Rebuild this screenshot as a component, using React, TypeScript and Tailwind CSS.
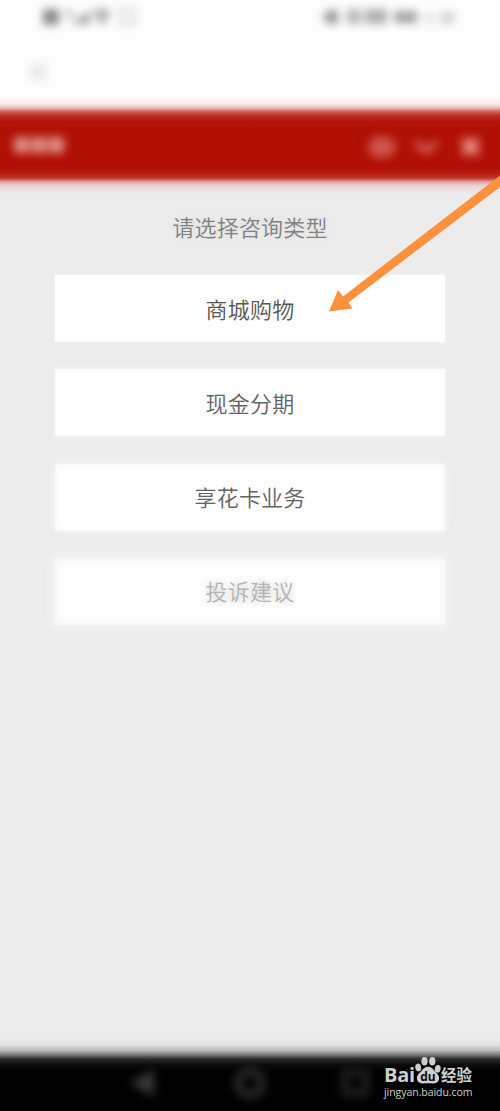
interface OptionCardProps {
  label: string;
  className?: string;
}

const options: OptionCardProps[] = [
  { label: "商城购物", className: "bg-[#fefefe] text-[#565656] shadow-[0_0_3px_#f8f8f8]" },
  { label: "现金分期", className: "bg-[#fefefe] text-[#626262] shadow-[0_0_4px_#f8f8f8,inset_0_0_4px_#f8f8f8]" },
  { label: "享花卡业务", className: "bg-[#fefefe] text-[#626262] shadow-[0_0_7px_#f8f8f8,inset_0_0_6px_#f6f6f6]" },
];

function OptionCard({ label, className }: OptionCardProps) {
  return (
    <button
      className={`flex h-[67px] w-[390px] items-center justify-center pb-[2px] text-[22px] leading-none tracking-[0.2px] font-[350] ${className}`}
    >
      {label}
    </button>
  );
}

function StatusBar() {
  return (
    <div className="h-[36px] w-full">
      <svg className="h-[36px] w-[500px] blur-[4px]" viewBox="0 0 500 36" fill="none">
        {/* Carrier and network indicators */}
        <rect x="43" y="9" width="16" height="16" fill="#8c8c8c" />
        <path d="M64 11h10v6h-7z" fill="#bbb" />
        <path d="M71 24 90 10v14z" fill="#a4a4a4" />
        <path d="M93 11q9-5 18 0l-7 13h-4z" fill="#b0b0b0" />
        <rect x="121" y="10" width="13" height="14" stroke="#d4d4d4" strokeWidth="3" />
        {/* Alarm, sound, battery and clock */}
        <path d="M322 17l7-7h9v14h-9z" fill="#9a9a9a" />
        <rect x="347" y="9" width="14" height="15" fill="#b8b8b8" />
        <rect x="365" y="9" width="22" height="15" fill="#b0b0b0" />
        <rect x="394" y="11" width="23" height="12" fill="#a4a4a4" />
        <rect x="425" y="13" width="9" height="9" fill="#dedede" />
        <rect x="440" y="12" width="14" height="12" fill="#d4d4d4" />
      </svg>
    </div>
  );
}

function ChatHeader() {
  return (
    <header className="flex h-[98px] shrink-0 items-center justify-between bg-linear-[180deg,#fdfdfd_0px,#f9ecea_8px,#e9b8b4_12px,#cb5b52_16px,#b9271b_21px,#b3140a_26px,#b11004_32px,#b11004_70px,#b51b0e_77px,#c0352a_82px,#e0a8a4_86px,#ebd6d5_90px,#ececec_98px] pr-[18px] pl-[14px]">
      <svg className="mt-[2px] h-[30px] w-[52px] overflow-visible blur-[5px]" viewBox="0 0 52 30" fill="#df918a">
        <rect x="0" y="6" width="15" height="16" />
        <rect x="17" y="6" width="15" height="16" />
        <rect x="34" y="6" width="16" height="16" />
      </svg>
      <svg className="mt-[3px] h-[34px] w-[118px] overflow-visible blur-[5px]" viewBox="0 0 118 34" fill="none">
        <ellipse cx="18" cy="17" rx="14" ry="11" fill="#cc564c" />
        <path d="M51 12l11 9 11-9" stroke="#d4675e" strokeWidth="6" />
        <path d="M99 9l15 15M114 9 99 24" stroke="#ea938b" strokeWidth="7" />
      </svg>
    </header>
  );
}

function PointerArrow() {
  return (
    <svg
      className="pointer-events-none absolute top-[170px] right-0 h-[145px] w-[175px]"
      viewBox="325 170 175 145"
      fill="#ff913c"
    >
      <path d="M329 311.5 338 290l5 6.5L500 175.5V187L348.5 302.5l4 6z" />
    </svg>
  );
}

function BaiduMark() {
  return (
    <div className="flex w-[90px] flex-col text-[#cfcfcf]">
      <div className="flex h-[27px] items-end">
        <span className="w-[31px] font-['Open_Sans',sans-serif] text-[20px] leading-[18px] font-bold tracking-[-0.2px]">
          Bai
        </span>
        <svg className="h-[29px] w-[26px] shrink-0" viewBox="0 0 26 29" fill="currentColor">
          <ellipse cx="9.5" cy="6.3" rx="3.1" ry="4.2" />
          <ellipse cx="17.3" cy="6.3" rx="3.1" ry="4.2" />
          <ellipse cx="3.2" cy="12.5" rx="2.9" ry="3.9" transform="rotate(-12 3.2 12.5)" />
          <ellipse cx="22.7" cy="13.8" rx="2.9" ry="3.9" transform="rotate(12 22.7 13.8)" />
          <path d="M13 11.8c3.6 0 5 2.700 7 4.700 2.700 2.500 4.400 4.300 4.100 7.300-.4 3.500-3.100 4.900-6.100 4.600-3.300-.3-6.700-.3-10 0-3 .3-5.700-1.100-6.100-4.600-.3-3 1.400-4.800 4.100-7.300 2-2 3.400-4.700 7-4.700z" />
          <text
            x="13"
            y="26"
            fill="#0b0b0b"
            textAnchor="middle"
            className="font-['Open_Sans',sans-serif] text-[12px] font-bold"
          >
            du
          </text>
        </svg>
        <span className="pb-px text-[15.5px] leading-[18px] font-bold whitespace-nowrap">经验</span>
      </div>
      <span className="mt-[2px] font-['Open_Sans',sans-serif] text-[10.5px] leading-[13px] font-medium tracking-[-0.05px]">
        jingyan.baidu.com
      </span>
    </div>
  );
}

function NavigationBar() {
  return (
    <footer className="flex h-[73px] shrink-0 items-start justify-between bg-linear-[180deg,#ebebeb_0px,#e4e4e4_6px,#c0c0c0_12px,#777_17px,#2b2b2b_21px,#0a0a0a_27px,#000_34px] pt-[19px] pr-[26px] pl-[128px]">
      <svg className="mt-[6px] h-[40px] w-[244px] shrink-0 overflow-visible blur-[5px]" viewBox="0 0 244 40" fill="none">
        <path d="M2 20 26 6v28z" fill="#383838" />
        <circle cx="122" cy="20" r="12" stroke="#2b2b2b" strokeWidth="8" />
        <rect x="217" y="9" width="21" height="21" stroke="#222" strokeWidth="7" />
      </svg>
      <div className="-ml-[2px] shrink-0">
        <BaiduMark />
      </div>
    </footer>
  );
}

export default function App() {
  return (
    <div className="relative flex h-[1111px] w-[500px] flex-col overflow-hidden bg-[#ececec] font-['Noto_Sans_CJK_SC',sans-serif]">
      <div className="h-[96px] shrink-0 bg-[#fdfdfd]">
        <StatusBar />
        <div className="mt-[29px] ml-[31px] h-[14px] w-[15px] bg-[#e6e6e6] blur-[5px]" />
      </div>

      <ChatHeader />

      <main className="flex grow flex-col items-center">
        <h1 className="mt-[21px] text-[22px] leading-[22px] tracking-[0.2px] font-[350] text-[#808080] text-shadow-[0_0_8px_#dcdcdc]">
          请选择咨询类型
        </h1>
        <div className="mt-[38px] flex flex-col gap-[27.3px]">
          {options.map((option) => (
            <OptionCard key={option.label} {...option} />
          ))}
          <OptionCard
            label="投诉建议"
            className="bg-[#fefefe] text-[#b4b4b4] shadow-[0_0_10px_2px_#f7f7f7,inset_0_0_9px_1px_#f3f3f3] text-shadow-[0_0_8px_#c8c8c8]"
          />
        </div>
      </main>

      <NavigationBar />
      <PointerArrow />
    </div>
  );
}
